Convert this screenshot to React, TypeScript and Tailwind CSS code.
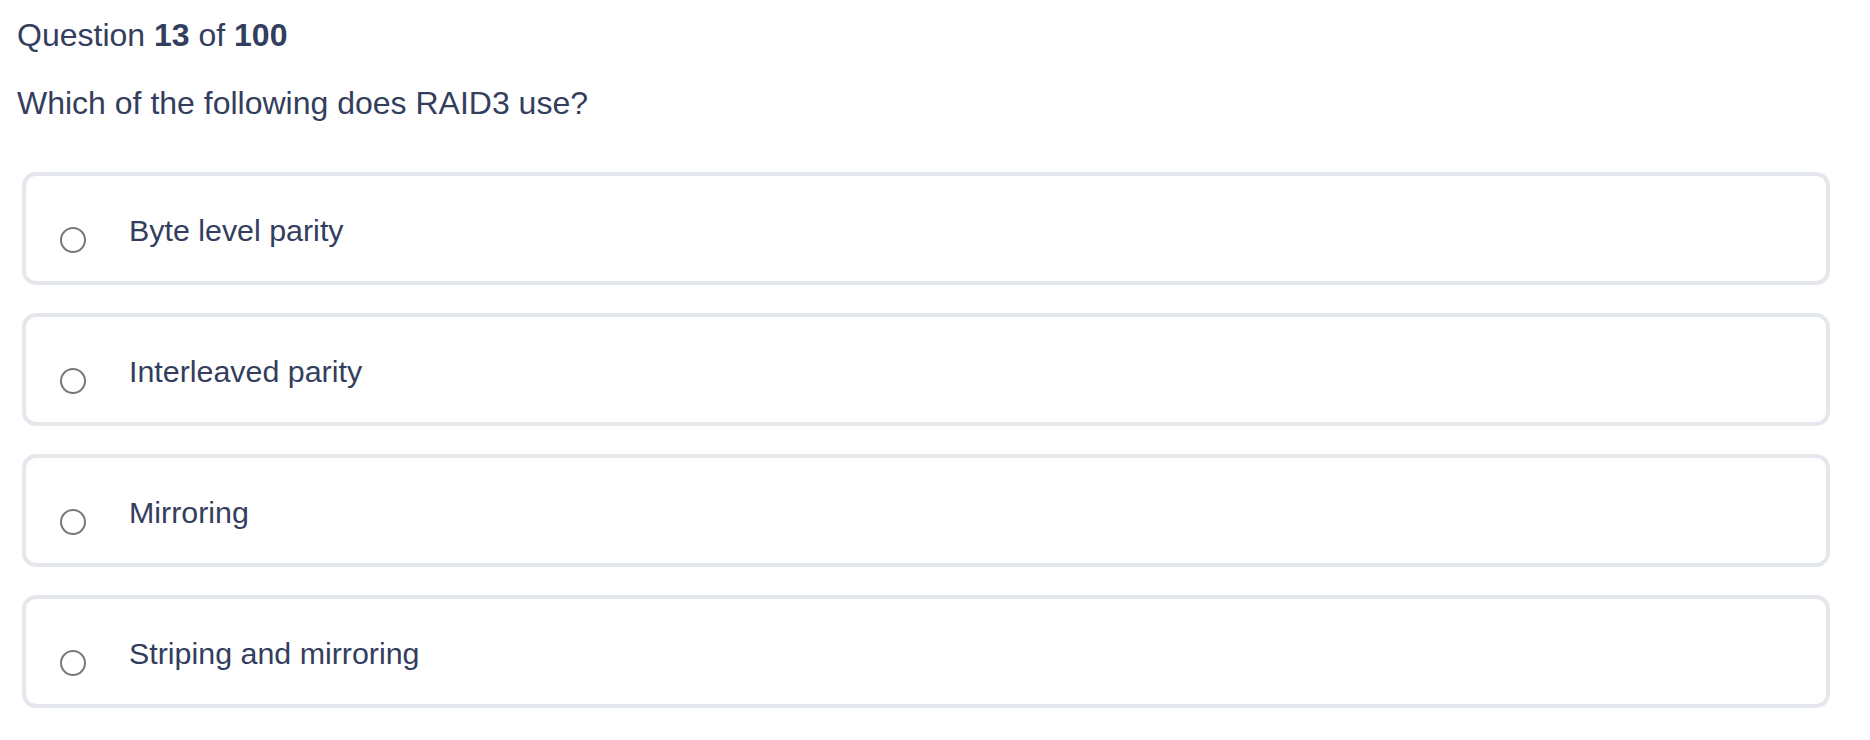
import React from "react";

const options = [
  "Byte level parity",
  "Interleaved parity",
  "Mirroring",
  "Striping and mirroring",
];

export default function App() {
  return (
    <div
      className="w-[1870px] h-[740px] bg-white text-[#333e5e] overflow-hidden"
      style={{ fontFamily: '"Liberation Sans", Arial, Helvetica, sans-serif' }}
    >
      <div className="pl-[17px] pt-[17px]">
        <div className="text-[32px] leading-[37px]">
          Question <span className="font-bold">13</span> of{" "}
          <span className="font-bold">100</span>
        </div>
        <div className="mt-[31px] text-[32px] leading-[37px]">
          Which of the following does RAID3 use?
        </div>
      </div>
      <div className="mt-[50px] ml-[22px] w-[1808px] flex flex-col gap-[28px]">
        {options.map((o) => (
          <div
            key={o}
            className="h-[113px] border-4 border-[#e4e7ec] rounded-[14px] flex items-start pt-[37px] pl-[34px]"
          >
            <div className="mt-[14px] w-[26px] h-[26px] shrink-0 rounded-full border-2 border-[#787878] bg-white" />
            <div className="ml-[43px] text-[30.4px] leading-[34px]">{o}</div>
          </div>
        ))}
      </div>
    </div>
  );
}
